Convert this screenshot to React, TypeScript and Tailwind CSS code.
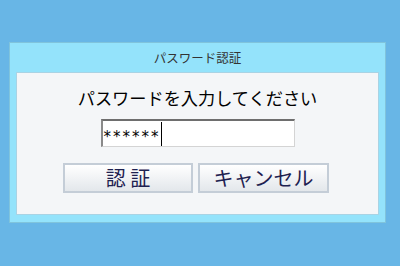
import React from "react";

const jp = { fontFamily: '"Noto Sans CJK JP", "Noto Sans", sans-serif' };

export default function App() {
  return (
    <div className="w-[400px] h-[266px] bg-[#68b6e6] pt-[42px] pl-[9px]" style={jp}>
      <div className="w-[377px] h-[181px] bg-[#94e3fb] border border-[#80c4dc] flex flex-col">
        <div className="h-[29px] flex items-center justify-center text-[12.5px] leading-none text-[#333] pt-[2px]">
          パスワード認証
        </div>
        <div className="mx-[6px] h-[143px] bg-[#f4f6f8] border border-[#a9d3e4] flex flex-col items-center pt-[13px]">
          <div className="text-[17.2px] leading-[23px] text-black font-normal">
            パスワードを入力してください
          </div>
          <div className="mt-[10px] w-[194px] h-[28px] bg-white border-t-2 border-l-2 border-b border-r border-t-[#6e6e6e] border-l-[#8a8a8a] border-b-[#d4d4d4] border-r-[#d4d4d4] flex items-center pl-[1px]">
            <span className="text-[15px] leading-none text-black tracking-[2px] pt-[7px]" style={{ fontFamily: '"DejaVu Sans", sans-serif' }}>
              ******
            </span>
            <span className="w-[1px] h-[24px] bg-black" />
          </div>
          <div className="mt-[16px] flex gap-[5px] ml-[-3px]">
            <button className="w-[130px] h-[30px] border-2 border-[#c4cdd7] bg-gradient-to-b from-white to-[#e3e7eb] text-[20px] leading-none text-[#1e2150] flex items-center justify-center">
              認 証
            </button>
            <button className="w-[131px] h-[30px] border-2 border-[#c4cdd7] bg-gradient-to-b from-white to-[#e3e7eb] text-[20px] leading-none text-[#1e2150] flex items-center justify-center">
              キャンセル
            </button>
          </div>
        </div>
      </div>
    </div>
  );
}
